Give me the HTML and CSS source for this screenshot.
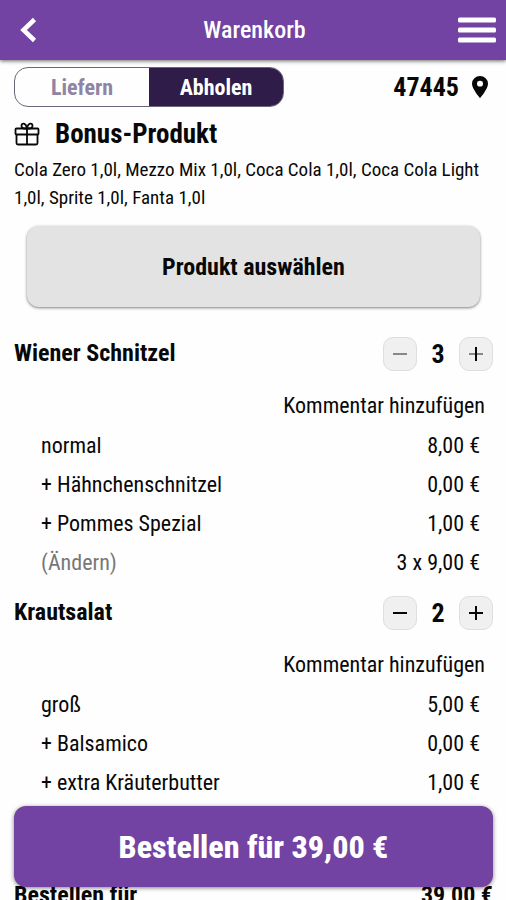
FILE: index.html
```html
<!DOCTYPE html>
<html lang="de">
<head>
<meta charset="utf-8">
<meta name="viewport" content="width=device-width, initial-scale=1">
<title>Warenkorb</title>
<link rel="stylesheet" href="styles.css">
</head>
<body>
<header class="topbar">
  <button class="icon-button" type="button" aria-label="Zurück">
    <svg width="32" height="32" viewBox="0 0 32 32" fill="none" stroke="currentColor" stroke-width="4.500"><path d="M21.500 5.500 10.500 16l11 10.500"/></svg>
  </button>
  <h1 class="title">Warenkorb</h1>
  <button class="icon-button" type="button" aria-label="Menü">
    <svg width="38" height="32" viewBox="0 0 38 32" fill="currentColor"><rect y="3.500" width="38" height="5" rx="1.500"/><rect y="13.500" width="38" height="5" rx="1.500"/><rect y="23.500" width="38" height="5" rx="1.500"/></svg>
  </button>
</header>
<main class="cart">
  <div class="delivery">
    <div class="toggle">
      <button class="toggle-option" type="button" aria-pressed="false">Liefern</button>
      <button class="toggle-option active" type="button" aria-pressed="true">Abholen</button>
    </div>
    <a class="location" href="#plz">47445
      <svg width="16" height="22" viewBox="0 0 16 23" preserveAspectRatio="none" fill="currentColor" fill-rule="evenodd"><path d="M8 0a8 8 0 0 0-8 8c0 5.500 8 15 8 15s8-9.500 8-15a8 8 0 0 0-8-8Zm0 5a3 3 0 1 1 0 6 3 3 0 0 1 0-6Z"/></svg>
    </a>
  </div>
  <section class="bonus">
    <h2 class="bonus-title">
      <svg width="26" height="24" viewBox="0 0 26 24" fill="none" stroke="currentColor" stroke-width="1.800"><rect x="1.500" y="6.500" width="23" height="6" rx="1"/><path d="M2.500 12.500V21q0 1.500 1.500 1.500h18q1.500 0 1.500-1.500v-8.500M13 6.500v16M13 6.500C12 .5 7.500.5 7.500 3.800c0 1.500 1 2.700 2.500 2.700h3c1-6 5.500-6 5.500-2.700 0 1.500-1 2.700-2.500 2.700h-3"/></svg>
      Bonus-Produkt
    </h2>
    <p class="bonus-text">Cola Zero 1,0l, Mezzo Mix 1,0l, Coca Cola 1,0l, Coca Cola Light 1,0l, Sprite 1,0l, Fanta 1,0l</p>
    <button class="choose" type="button">Produkt auswählen</button>
  </section>
  <section class="item">
    <div class="item-head">
      <h2 class="item-name">Wiener Schnitzel</h2>
      <div class="stepper">
        <button class="step muted" type="button" aria-label="Weniger"><svg width="16" height="16" viewBox="0 0 16 16" stroke="currentColor" stroke-width="2"><path d="M1 8h14"/></svg></button>
        <span class="count">3</span>
        <button class="step" type="button" aria-label="Mehr"><svg width="16" height="16" viewBox="0 0 16 16" stroke="currentColor" stroke-width="2"><path d="M1 8h14" class="bar-muted"/><path d="M8 1v14"/></svg></button>
      </div>
    </div>
    <a class="comment" href="#kommentar-1">Kommentar hinzufügen</a>
    <ul class="lines">
      <li class="line"><span>normal</span><span>8,00 €</span></li>
      <li class="line"><span>+ Hähnchenschnitzel</span><span>0,00 €</span></li>
      <li class="line"><span>+ Pommes Spezial</span><span>1,00 €</span></li>
      <li class="line"><a class="change" href="#aendern-1">(Ändern)</a><span>3 x 9,00 €</span></li>
    </ul>
  </section>
  <section class="item">
    <div class="item-head">
      <h2 class="item-name">Krautsalat</h2>
      <div class="stepper">
        <button class="step" type="button" aria-label="Weniger"><svg width="16" height="16" viewBox="0 0 16 16" stroke="currentColor" stroke-width="2"><path d="M1 8h14"/></svg></button>
        <span class="count">2</span>
        <button class="step" type="button" aria-label="Mehr"><svg width="16" height="16" viewBox="0 0 16 16" stroke="currentColor" stroke-width="2"><path d="M1 8h14M8 1v14"/></svg></button>
      </div>
    </div>
    <a class="comment" href="#kommentar-2">Kommentar hinzufügen</a>
    <ul class="lines">
      <li class="line"><span>groß</span><span>5,00 €</span></li>
      <li class="line"><span>+ Balsamico</span><span>0,00 €</span></li>
      <li class="line"><span>+ extra Kräuterbutter</span><span>1,00 €</span></li>
    </ul>
  </section>
  <div class="total"><span>Bestellen für</span><span>39,00 €</span></div>
</main>
<button class="order" type="button">Bestellen für 39,00 €</button>
</body>
</html>
```
FILE: styles.css
```css
* {
  box-sizing: border-box;
}

body {
  margin: 0;
  height: 100vh;
  display: flex;
  flex-direction: column;
  background: #fefefe;
  color: #080808;
  font-family: "Roboto Condensed", "Liberation Sans Narrow", Roboto, sans-serif;
  font-size: 22px;
}

button {
  padding: 0;
  border: 0;
  background: none;
  color: inherit;
  font: inherit;
  cursor: pointer;
}

a {
  color: inherit;
  text-decoration: none;
}

h1,
h2,
p,
ul {
  margin: 0;
  padding: 0;
}

svg {
  display: block;
  flex: none;
}

.topbar {
  flex: none;
  z-index: 1;
  display: grid;
  grid-template-columns: 1fr auto 1fr;
  align-items: center;
  height: 60px;
  padding: 0 10px 0 13px;
  background: #7243a2;
  color: #fff;
  box-shadow: 0 1px 4px rgba(0, 0, 0, 0.6);
}

.icon-button {
  justify-self: start;
}

.icon-button:last-child {
  justify-self: end;
}

.title {
  font-size: 24px;
  font-weight: 500;
}

.cart {
  flex: 1;
  min-height: 0;
  overflow-y: auto;
  scrollbar-width: none;
  padding: 7px 13px 0 14px;
}

.delivery {
  display: flex;
  justify-content: space-between;
  align-items: center;
}

.toggle {
  display: grid;
  grid-template-columns: 1fr 1fr;
  width: 270px;
  height: 40px;
  overflow: hidden;
  border: 1px solid #6b6678;
  border-radius: 14px;
}

.toggle-option {
  color: #8e84a3;
  font-weight: 700;
}

.toggle-option.active {
  background: #301c49;
  color: #fff;
}

.location {
  display: flex;
  align-items: center;
  gap: 13px;
  padding-right: 5px;
  font-size: 26px;
  font-weight: 700;
}

.bonus-title {
  display: flex;
  align-items: center;
  gap: 15px;
  height: 54px;
  font-size: 27px;
}

.bonus-text {
  margin-top: -5px;
  font-size: 19px;
  line-height: 28px;
}

.choose {
  display: block;
  width: calc(100% - 26px);
  height: 81px;
  margin: 14px 13px 28px;
  border-radius: 12px;
  background: #e3e3e3;
  box-shadow: 0 1px 3px rgba(0, 0, 0, 0.5);
  font-size: 24px;
  font-weight: 700;
}

.item {
  margin-bottom: 12px;
}

.item-head {
  display: flex;
  justify-content: space-between;
  align-items: center;
  height: 38px;
  margin-bottom: 13px;
}

.item-name {
  padding-bottom: 3px;
  font-size: 24px;
}

.stepper {
  display: grid;
  grid-template-columns: 34px 42px 34px;
  align-items: center;
}

.step {
  display: grid;
  place-items: center;
  height: 34px;
  border: 1px solid #dedede;
  border-radius: 10px;
  background: #f0f0f0;
}

.step.muted,
.bar-muted {
  color: #888;
  stroke: #888;
}

.count {
  text-align: center;
  font-size: 26px;
  font-weight: 700;
}

.comment {
  display: block;
  padding-right: 8px;
  line-height: 39px;
  text-align: right;
}

.lines {
  padding: 1px 13px 0 27px;
  list-style: none;
}

.line {
  display: flex;
  justify-content: space-between;
  line-height: 39px;
}

.change {
  color: #777;
}

.total {
  display: flex;
  justify-content: space-between;
  margin-top: 74px;
  font-size: 24px;
  font-weight: 700;
  line-height: 39px;
}

.order {
  position: absolute;
  right: 13px;
  bottom: 13px;
  left: 14px;
  height: 81px;
  border-radius: 12px;
  background: #7243a2;
  color: #fff;
  box-shadow: 0 1px 4px rgba(0, 0, 0, 0.5);
  font-size: 32px;
  font-weight: 800;
}
```
